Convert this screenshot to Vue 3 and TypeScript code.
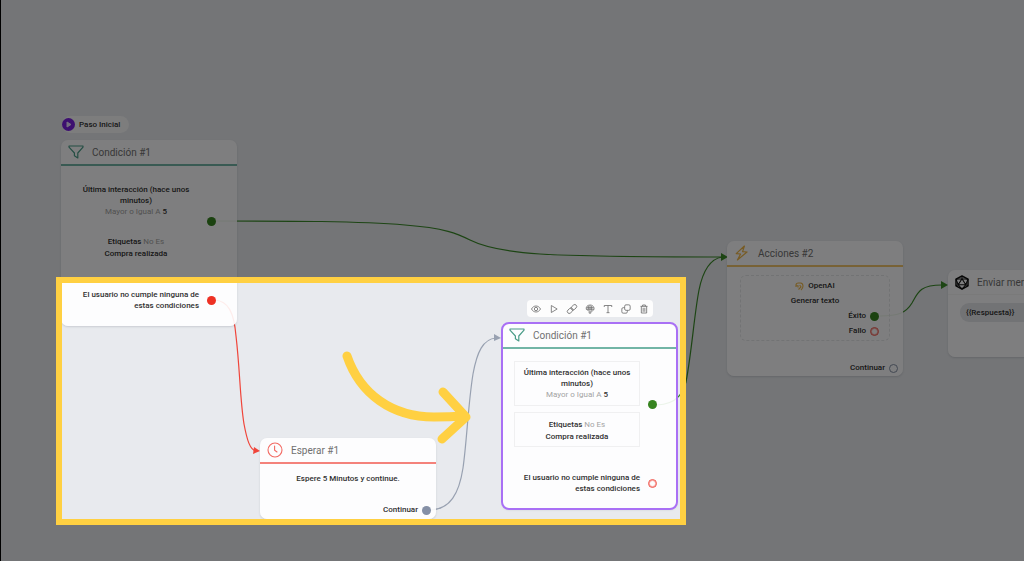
<script setup lang="ts">
interface Edge {
  id: string
  path: string
  color: string
  arrow: string
}

interface ConditionNode {
  id: string
  title: string
  selected: boolean
}

const edges: Edge[] = [
  { id: 'cond-acc', path: 'M215 221 C290 221 360 221 405 225 C445 228 458 234 470 240 C486 248 510 252 540 254 C590 257 650 257 722 257', color: '#3a8a28', arrow: 'M721 253 L728 257 L721 261 Z' },
  { id: 'cond2-acc', path: 'M657 405 C678 404 683 392 686 382 C692 350 694 316 699 290 C703 270 710 259 722 257', color: '#3a8a28', arrow: '' },
  { id: 'acc-msg', path: 'M880 316 C898 316 906 313 912 303 C918 292 920 285 942 285', color: '#3a8a28', arrow: 'M941 281 L948 285 L941 289 Z' },
  { id: 'cond-wait', path: 'M215 300 C228 301 234 312 236 336 C240 370 240 400 244 424 C247 440 250 450 256 451', color: '#f0453a', arrow: 'M254 447 L260 451 L253 454 Z' },
  { id: 'wait-cond2', path: 'M431 510 C450 509 459 494 463 468 C467 440 468 405 473 374 C477 352 483 339 496 338', color: '#98a1b1', arrow: 'M494 334 L501 338 L494 341 Z' },
]

const conditions: ConditionNode[] = [
  { id: 'first', title: 'Condición #1', selected: false },
  { id: 'second', title: 'Condición #1', selected: true },
]
</script>

<template>
  <main class="canvas">
    <svg class="edges" aria-hidden="true">
      <g v-for="edge in edges" :key="edge.id">
        <path :d="edge.path" fill="none" :stroke="edge.color" stroke-width="1.2" />
        <path v-if="edge.arrow" :d="edge.arrow" :fill="edge.color" />
      </g>
    </svg>

    <div class="start">
      <svg width="13" height="13" viewBox="0 0 13 13" aria-hidden="true">
        <circle cx="6.5" cy="6.5" r="6.5" fill="#7a1fe0" />
        <path d="M5 4 L9 6.5 L5 9 Z" fill="#e9dcff" stroke="#e9dcff" stroke-linejoin="round" />
      </svg>
      <span>Paso Inicial</span>
    </div>

    <article
      v-for="node in conditions"
      :key="node.id"
      class="card condition"
      :class="[node.id, { selected: node.selected }]"
    >
      <header class="head teal">
        <svg width="16" height="14" viewBox="0 0 16 14" aria-hidden="true">
          <path d="M1 1 H15 V2.2 L9.8 8 V13 L6.4 10.8 V8 L1 2.2 Z" fill="none" stroke="#4a9c88" stroke-width="1.2" stroke-linejoin="round" />
        </svg>
        <h2>{{ node.title }}</h2>
      </header>
      <div class="rules">
        <div class="rule-list">
          <div class="rule">
            <p>Última interacción (hace unos minutos)</p>
            <p class="line"><span class="muted">Mayor o Igual A</span> 5</p>
          </div>
          <div class="rule tags">
            <p class="line">Etiquetas <span class="muted">No Es</span></p>
            <p class="line">Compra realizada</p>
          </div>
        </div>
        <i class="port green"></i>
      </div>
      <div class="otherwise">
        <p>El usuario no cumple ninguna de estas condiciones</p>
        <i class="port" :class="node.selected ? 'red-ring' : 'red'"></i>
      </div>
    </article>

    <div class="toolbar" role="toolbar" aria-label="Acciones del nodo">
      <button type="button" aria-label="Ver">
        <svg viewBox="0 0 12 12"><path d="M0.6 6 C3 1.2 9 1.2 11.4 6 C9 10.8 3 10.8 0.6 6 Z" /><circle cx="6" cy="6" r="2" /></svg>
      </button>
      <button type="button" aria-label="Probar">
        <svg viewBox="0 0 12 12"><path d="M2.8 1.8 L9.8 6 L2.8 10.2 Z" /></svg>
      </button>
      <button type="button" aria-label="Enlazar">
        <svg viewBox="0 0 12 12"><g transform="rotate(-42 6 6)"><rect x="-0.8" y="3.7" width="7.6" height="4.6" rx="2.3" /><rect x="5.2" y="3.7" width="7.6" height="4.6" rx="2.3" /></g></svg>
      </button>
      <button type="button" aria-label="Color">
        <svg viewBox="0 0 12 12"><path d="M6 1.2 C2.6 1.2 0.8 4 1.6 6.4 C2.4 8 4.5 6.8 5 8 V11 H7 V8.5 C10.2 8.6 11.4 6.5 10.7 4.3 C10 2.2 8.2 1.2 6 1.2 Z" /><path d="M4 2.4 V6.5 M6 1.6 V8 M8 2.4 V7.6 M2 4.4 H10.4 M2 6.3 H10.4" /></svg>
      </button>
      <button type="button" aria-label="Texto">
        <svg viewBox="0 0 12 12"><path d="M1.5 3.6 V1.8 H10.5 V3.6 M6 1.8 V10.4 M4.2 10.4 H7.8" /></svg>
      </button>
      <button type="button" aria-label="Duplicar">
        <svg viewBox="0 0 12 12"><rect x="4.4" y="1" width="6.6" height="6.6" rx="1.6" /><path d="M4.4 4.4 H2.6 Q1 4.4 1 6 V9.4 Q1 11 2.6 11 H6 Q7.6 11 7.6 9.4 V7.6" /></svg>
      </button>
      <button type="button" aria-label="Eliminar">
        <svg viewBox="0 0 12 12"><path d="M1.8 2.8 H10.2 M4.3 2.8 V1.2 H7.7 V2.8 M2.8 2.8 V10.8 H9.2 V2.8 M5 4.5 V9.4 M7 4.5 V9.4" /></svg>
      </button>
    </div>

    <article class="card wait">
      <header class="head coral">
        <svg width="16" height="16" viewBox="0 0 16 16" fill="none" stroke="#f26a63" stroke-width="1.1" stroke-linecap="round" aria-hidden="true">
          <circle cx="8" cy="8" r="7" />
          <path d="M7.6 4 V8.2 L10 10" />
        </svg>
        <h2>Esperar #1</h2>
      </header>
      <p class="wait-text">Espere 5 Minutos y continue.</p>
      <p class="outlet next">Continuar <i class="port slate"></i></p>
    </article>

    <article class="card actions">
      <header class="head amber">
        <svg width="16" height="16" viewBox="0 0 16 16" aria-hidden="true">
          <path d="M10.4 1 L2.2 8.6 L6.6 9 L3.4 15 L13 7 L8.6 6.6 Z" fill="none" stroke="#efb648" stroke-width="1.2" stroke-linejoin="round" />
        </svg>
        <h2>Acciones #2</h2>
      </header>
      <section class="step">
        <h3>
          <svg width="9" height="9" viewBox="0 0 9 9" fill="none" stroke="#efb648" stroke-width="1.1" aria-hidden="true">
            <path d="M1 5 V3 Q1 1 3.5 1 H5.5 Q8 1.3 8 4 Q8 6.5 6 8 M1 3.8 H3 V5.5 M4.7 3 L6 5 L3.5 7.5" />
          </svg>
          OpenAI
        </h3>
        <p class="step-name">Generar texto</p>
        <p class="outlet">Éxito <i class="port green"></i></p>
        <p class="outlet">Fallo <i class="port red-ring"></i></p>
      </section>
      <p class="outlet next">Continuar <i class="port slate-ring"></i></p>
    </article>

    <article class="card message">
      <header class="head plain">
        <svg width="14" height="15" viewBox="0 0 14 15" fill="none" stroke="#101010" stroke-width="1.5" stroke-linejoin="round" aria-hidden="true">
          <path d="M7 1 L13 4.2 V10.8 L7 14 L1 10.8 V4.2 Z" />
          <path d="M7 3.8 L10.8 9.8 H3.2 Z M7 1 V3.8 M1 4.2 L7 3.8 L13 4.2 L10.8 9.8 L13 10.8 M1 4.2 L3.2 9.8 L1 10.8 M3.2 9.8 L7 14 L10.8 9.8" stroke-width="1.1" />
        </svg>
        <h2>Enviar mensaje #1</h2>
      </header>
      <p class="bubble">{{ '\u007B\u007BRespuesta\u007D\u007D' }}</p>
    </article>

    <div class="spotlight"></div>
    <svg class="pointer" width="132" height="100" viewBox="0 0 132 100" aria-hidden="true">
      <path d="M7 6 C20 44 52 67 94 67 Q110 67 124 66 M103 42 L126 67 L102 89" />
    </svg>
  </main>
</template>

<style>
body {
  margin: 0;
}
</style>

<style scoped>
.canvas {
  position: relative;
  box-sizing: border-box;
  width: 100%;
  height: 100vh;
  overflow: hidden;
  border-left: 1px solid #000;
  background: #e8eaee;
  color: #303030;
  font: 500 8px/11px Roboto, "Noto Sans", sans-serif;
}
h2, h3, p {
  margin: 0;
  font-weight: inherit;
  font-size: inherit;
}
svg {
  flex: none;
}
.edges {
  position: absolute;
  top: 0;
  left: -1px;
  width: 100%;
  height: 100%;
}
.start {
  position: absolute;
  top: 116px;
  left: 61px;
  display: flex;
  align-items: center;
  gap: 4px;
  padding: 2px 9px 2px 0;
  border-radius: 9px;
  background: #fafafb;
}
.card {
  position: absolute;
  box-sizing: border-box;
  width: 176px;
  border-radius: 7px;
  background: rgba(255, 255, 255, 0.9);
  box-shadow: 0 1px 2px rgba(60, 70, 90, 0.18);
}
.condition {
  padding-bottom: 15px;
}
.first {
  top: 140px;
  left: 60px;
}
.second {
  top: 323px;
  left: 501px;
}
.selected {
  width: 175px;
  outline: 2px solid #a970f5;
  outline-offset: -1px;
}
.head {
  display: flex;
  align-items: center;
  gap: 8px;
  height: 24px;
  padding-left: 7px;
  border-bottom: 2px solid transparent;
}
.head h2 {
  color: #707070;
  font-size: 10px;
  font-weight: 400;
  white-space: nowrap;
}
.teal {
  border-color: #72b5a6;
}
.coral {
  border-color: #f4827b;
}
.amber {
  border-color: #f0c46c;
}
.plain {
  border-bottom: 1px solid #f4f4f5;
}
.rules {
  display: flex;
  align-items: center;
  gap: 8px;
  padding: 12px 0 0 12px;
}
.rule-list {
  display: flex;
  flex-direction: column;
  gap: 6px;
  width: 126px;
  text-align: center;
}
.rule {
  padding: 5px 6px 4px;
  border: 1px solid transparent;
}
.tags {
  padding: 6px 6px 3px;
}
.selected .rule {
  border-color: #f0f0f1;
}
.line {
  line-height: 12px;
}
.muted {
  color: #a3a3a3;
  font-weight: 400;
}
.otherwise {
  display: flex;
  align-items: center;
  gap: 8px;
  padding: 25px 0 0 12px;
  text-align: right;
}
.otherwise p {
  width: 126px;
}
.port {
  box-sizing: border-box;
  flex: none;
  width: 9px;
  height: 9px;
  border-radius: 50%;
}
.green {
  background: #378420;
}
.red {
  background: #ee3124;
}
.red-ring {
  border: 1px solid #f0564d;
  box-shadow: inset 0 0 0 1px #f9aaa5;
}
.slate {
  background: #8590a6;
}
.slate-ring {
  border: 1px solid #8590a6;
}
.toolbar {
  position: absolute;
  top: 300px;
  left: 526px;
  display: flex;
  align-items: center;
  justify-content: space-around;
  width: 126px;
  height: 17px;
  border-radius: 4px;
  background: #fdfdfd;
}
.toolbar button {
  display: flex;
  padding: 0;
  border: 0;
  background: none;
}
.toolbar svg {
  width: 10px;
  height: 10px;
  fill: none;
  overflow: visible;
  stroke: #707070;
  stroke-width: 1;
  stroke-linejoin: round;
}
.wait {
  top: 438px;
  left: 259px;
  padding-bottom: 3px;
}
.wait-text {
  padding: 9px 0 20px;
  text-align: center;
}
.outlet {
  display: flex;
  align-items: center;
  justify-content: flex-end;
  gap: 4px;
  line-height: 12px;
}
.next {
  padding-right: 5px;
}
.actions {
  top: 241px;
  left: 726px;
  padding-bottom: 2px;
}
.step {
  display: flex;
  flex-direction: column;
  gap: 3px;
  margin: 8px 13px 21px;
  padding: 4px 10px 3px;
  border: 1px dashed #e4e6e9;
  border-radius: 6px;
}
.step h3 {
  display: flex;
  align-items: center;
  justify-content: center;
  gap: 4px;
  line-height: 12px;
}
.step-name {
  text-align: center;
  line-height: 12px;
}
.message {
  top: 270px;
  left: 947px;
  padding-bottom: 35px;
}
.bubble {
  margin: 8px 12px 0;
  padding: 4px 6px;
  border-radius: 9px;
  background: #e4e6ea;
}
.spotlight {
  position: absolute;
  box-sizing: border-box;
  top: 277px;
  left: 55px;
  width: 630px;
  height: 248px;
  border: 6px solid #ffd042;
  box-shadow: 0 0 0 2000px rgba(0, 0, 0, 0.5);
}
.pointer {
  position: absolute;
  top: 350px;
  left: 339px;
  fill: none;
  stroke: #ffd042;
  stroke-width: 9;
  stroke-linecap: round;
  stroke-linejoin: round;
}
</style>
